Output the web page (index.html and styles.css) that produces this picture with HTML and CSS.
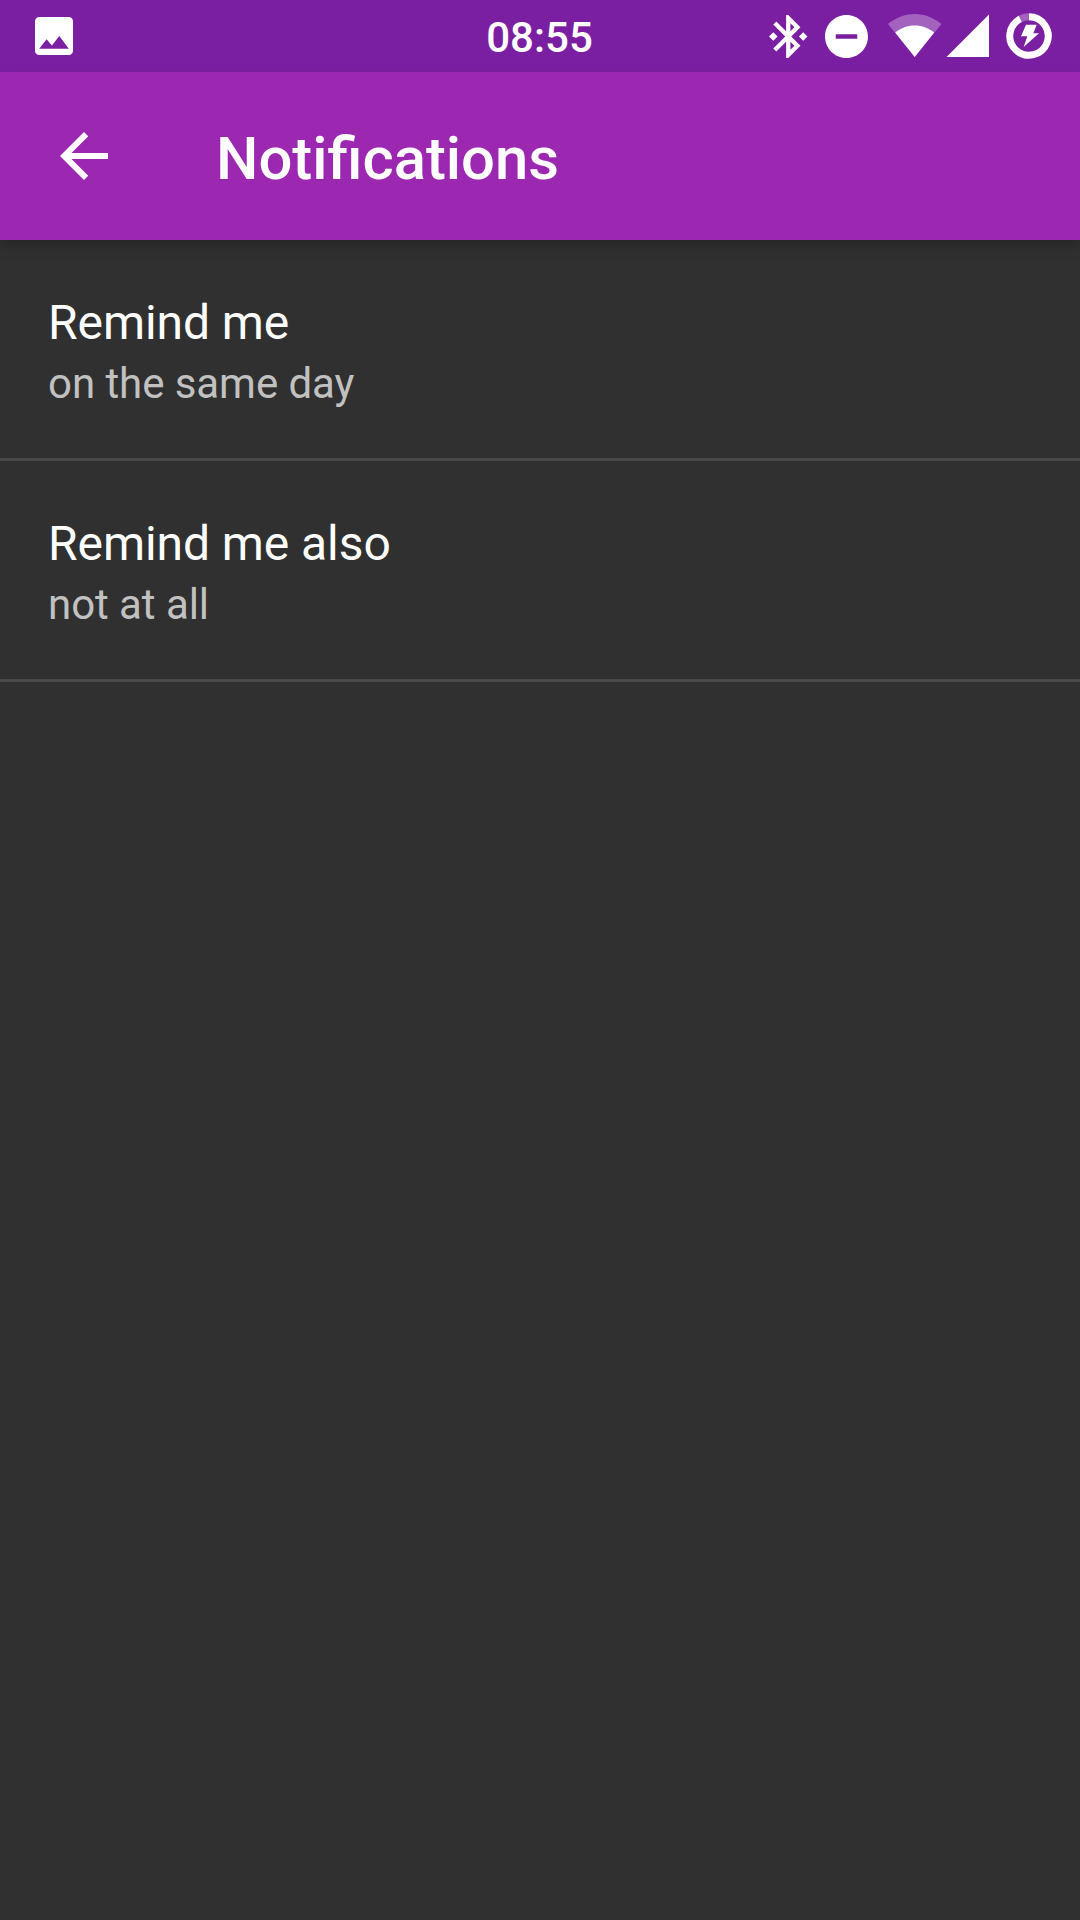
FILE: index.html
```html
<!DOCTYPE html>
<html lang="en">
<head>
<meta charset="utf-8">
<title>Notifications</title>
<link rel="stylesheet" href="styles.css">
</head>
<body>
<header class="status-bar">
  <div class="status-left">
    <svg class="icon-image" viewBox="3 3 18 18" fill="#fff"><path d="M21 19V5c0-1.100-.9-2-2-2H5c-1.100 0-2 .9-2 2v14c0 1.100.9 2 2 2h14c1.100 0 2-.9 2-2zM8.500 13.500l2.500 3.010L14.500 12l4.500 6H5l3.500-4.500z"/></svg>
  </div>
  <time class="clock">08:55</time>
  <div class="status-right">
    <svg class="icon-bluetooth" viewBox="3 2 18 20" fill="#fff"><path d="M7 12l-2-2-2 2 2 2 2-2zm10.710-4.290L12 2h-1v7.590L6.410 5 5 6.410 10.590 12 5 17.590 6.410 19 11 14.410V22h1l5.710-5.710-4.300-4.290 4.300-4.290zM13 5.830l1.880 1.880L13 9.590V5.830zm1.880 10.460L13 18.170v-3.760l1.880 1.880zM19 10l-2 2 2 2 2-2-2-2z"/></svg>
    <svg class="icon-dnd" viewBox="2 2 20 20" fill="#fff"><path d="M12 2C6.480 2 2 6.480 2 12s4.480 10 10 10 10-4.480 10-10S17.520 2 12 2zm5 11H7v-2h10v2z"/></svg>
    <svg class="icon-wifi" viewBox="0 0 54 43" fill="#fff"><path fill-opacity=".3" d="M0 10C7.500 4 16.500 0 26.700 0s19.200 4 26.700 10L26.700 43z"/><path d="M7.200 18.600C12.500 14.200 19 11.500 26.700 11.500s14.200 2.700 19.500 7.100L26.700 43z"/></svg>
    <svg class="icon-signal" viewBox="0 0 43 43" fill="#fff"><path d="M.5 43H43V.5z"/></svg>
    <svg class="icon-battery" viewBox="0 0 46 46"><path d="M14.280 5.890A19.200 19.200 0 0 1 23 3.800" fill="none" stroke="#fff" stroke-opacity=".3" stroke-width="7"/><path d="M23 3.800A19.200 19.200 0 1 1 14.280 5.890" fill="none" stroke="#fff" stroke-width="7"/><path fill="#fff" d="M20 11.800H30.700L27.300 20.300H33L17.700 34L21.300 23.300H15z"/></svg>
  </div>
</header>
<nav class="app-bar">
  <svg class="icon-back" viewBox="4 4 16 16" fill="#fff"><path d="M20 11H7.830l5.590-5.590L12 4l-8 8 8 8 1.410-1.410L7.830 13H20v-2z"/></svg>
  <h1 class="app-title">Notifications</h1>
</nav>
<main class="settings">
  <section class="setting">
    <h2 class="setting-title">Remind me</h2>
    <p class="setting-value">on the same day</p>
  </section>
  <section class="setting">
    <h2 class="setting-title">Remind me also</h2>
    <p class="setting-value">not at all</p>
  </section>
</main>
</body>
</html>
```
FILE: styles.css
```css
* { box-sizing: border-box; margin: 0; padding: 0; }

body {
  width: 1080px;
  height: 1920px;
  overflow: hidden;
  background: #303030;
  color: #fff;
  font-family: Roboto, "Noto Sans", sans-serif;
}

svg { display: block; flex: none; }

.status-bar {
  display: grid;
  grid-template-columns: 1fr auto 1fr;
  height: 72px;
  background: #7b1fa2;
}

.status-left { padding: 17px 0 0 35px; }

.clock {
  padding: 13px 1px 0 0;
  font-size: 42px;
  font-weight: 500;
  line-height: 49px;
}

.status-right {
  display: flex;
  align-items: flex-start;
  justify-content: flex-end;
  padding-right: 28px;
}

.icon-image { width: 38px; height: 38px; }
.icon-bluetooth { width: 38.500px; height: 43px; margin: 15px 17.500px 0 0; }
.icon-dnd { width: 43px; height: 43px; margin: 15px 20px 0 0; }
.icon-wifi { width: 54px; height: 43px; margin: 14px 4px 0 0; }
.icon-signal { width: 43px; height: 43px; margin: 14px 17px 0 0; }
.icon-battery { width: 46px; height: 46px; margin-top: 13px; }

.app-bar {
  position: relative;
  display: flex;
  align-items: flex-start;
  height: 168px;
  padding-left: 60px;
  background: #9c27b0;
  box-shadow: 0 6px 12px rgba(0, 0, 0, .22);
}

.icon-back { width: 48px; height: 48px; margin: 60px 108px 0 0; }

.app-title {
  padding-top: 52px;
  font-size: 59.800px;
  font-weight: 500;
  line-height: 70px;
}

.setting {
  height: 221px;
  padding: 55px 48px 0;
  border-bottom: 3px solid #494949;
}

.setting-title {
  font-size: 48px;
  font-weight: 400;
  letter-spacing: -.07px;
  line-height: 56px;
}

.setting-value {
  margin-top: 8px;
  color: #c1c1c1;
  font-size: 42px;
  letter-spacing: -.06px;
  line-height: 50px;
}
```
